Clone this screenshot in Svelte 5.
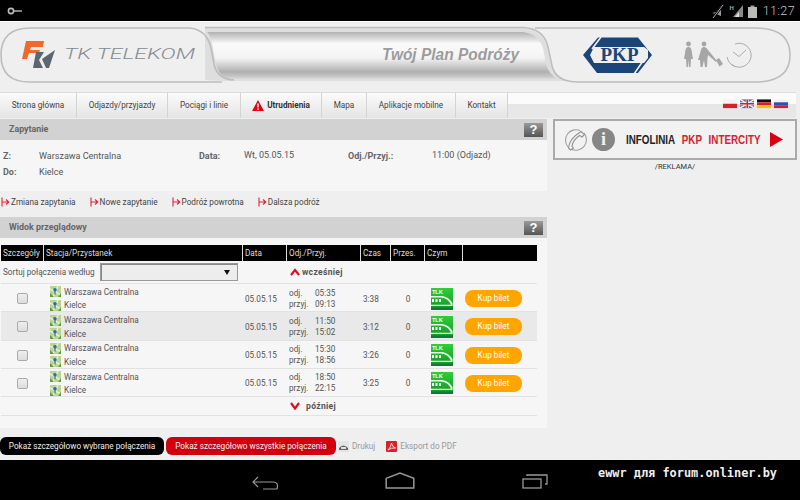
<script>
  const nav = [
    { label: 'Strona główna', w: 77 },
    { label: 'Odjazdy/przyjazdy', w: 91 },
    { label: 'Pociągi i linie', w: 73 },
    { label: 'Utrudnienia', w: 81, warn: true },
    { label: 'Mapa', w: 45 },
    { label: 'Aplikacje mobilne', w: 89 },
    { label: 'Kontakt', w: 52 }
  ];
  const links = ['Zmiana zapytania', 'Nowe zapytanie', 'Podróż powrotna', 'Dalsza podróż'];
  const rows = [
    { dep: '05:35', arr: '09:13', time: '3:38' },
    { dep: '11:50', arr: '15:02', time: '3:12', alt: true },
    { dep: '15:30', arr: '18:56', time: '3:26' },
    { dep: '18:50', arr: '22:15', time: '3:25' }
  ];
</script>

{#snippet map()}
  <svg class="map" viewBox="0 0 11 11">
    <rect width="11" height="11" fill="#b9d68e" />
    <path d="M0 3 L11 9 M8 0 L3 11" stroke="#f0efd2" stroke-width="1.5" />
    <path d="M0 7 L4 11 H0Z M8 11 L11 7 V11Z" fill="#5f9e3e" />
    <circle cx="5" cy="3.8" r="1.8" fill="#2470b8" />
    <path d="M5 5 V8.5" stroke="#245a8c" stroke-width="1.1" />
  </svg>
{/snippet}

{#snippet help()}
  <span class="help">?</span>
{/snippet}

{#snippet arrow()}
  <svg class="arrow" viewBox="0 0 9 10"><path d="M1 0.5 V9.5 M1 5 H7.5 M5 2.5 L7.8 5 L5 7.5" fill="none" stroke="#e8203a" stroke-width="1.1" /></svg>
{/snippet}

<div class="screen">
  <div class="status">
    <svg class="key" viewBox="0 0 16 8"><circle cx="4" cy="4" r="2.6" fill="none" stroke="#bbb" stroke-width="1.6" /><path d="M7 4 H15" stroke="#bbb" stroke-width="1.4" /></svg>
    <div class="status-right">
      <svg class="st-icons" viewBox="0 0 47 14">
        <path d="M1 9 L5 8 L10 2 V12 L5 10Z" fill="#999" />
        <path d="M2 14 L12 1" stroke="#000" stroke-width="2.4" />
        <path d="M2 14 L12 1" stroke="#aaa" stroke-width="1" />
        <text x="18.5" y="5.5" class="hplus">H</text>
        <path d="M22 13 L32 13 L32 1 Z" fill="#8a8a8a" />
        <path d="M24 13 L28 13 L28 8 Z" fill="#ddd" />
        <rect x="37" y="3" width="9" height="11" fill="#bbb" /><rect x="39.5" y="1.5" width="4" height="1.5" fill="#999" />
      </svg>
      <span class="clock">11:27</span>
    </div>
  </div>

  <div class="page">
    <svg class="banner" viewBox="0 22 800 70" width="800" height="70">
      <defs>
        <linearGradient id="g" x1="0" x2="0" y1="0" y2="1">
          <stop offset="0" stop-color="#b2b2b2" /><stop offset=".25" stop-color="#fafafa" /><stop offset=".55" stop-color="#f4f4f4" /><stop offset=".85" stop-color="#b0b0b0" /><stop offset=".95" stop-color="#c8c8c8" /><stop offset="1" stop-color="#dcdcdc" />
        </linearGradient>
      </defs>
      <path d="M205 27.5 H522 Q542 29 547 47 L551 66 Q555 78 566 81 H225 L205 80Z" fill="#dedede" />
      <path d="M207 32 H522 Q538 33 543 48 L546 64 Q549 75 558 79 H232 Q219 78 216 64 L213 48 Q211 36 207 32Z" fill="url(#g)" />
      <path d="M222 82 H30 Q1 82 1 55 Q1 28 30 28 H190 Q207 30 211 48 L214 64 Q217 79 234 80" fill="none" stroke="#bdbdbd" stroke-width="1.6" />
      <path d="M205 27.5 H524 Q544 29 548 47 L552 66 Q556 82 578 82 H755 Q790 82 790 55 Q790 28 755 28 H535" fill="none" stroke="#bdbdbd" stroke-width="1.6" />
      <path d="M26 41 H44 L43 47 H31 L30 50 H40 L39 53 H29 L27 59 H22Z" fill="#f2682a" />
      <path d="M36 52 L44 52 L39 60 L43 68 H33Z M55 50 L49 68 H46 L42 59Z" fill="#5c6670" />
      <text x="64" y="59" class="tk" textLength="131" lengthAdjust="spacingAndGlyphs">TK TELEKOM</text>
      <text x="382" y="60" class="plan" textLength="137" lengthAdjust="spacingAndGlyphs">Twój Plan Podróży</text>

      <path d="M598 37.5 H638 L652 55 L638 73 H597 L583 55Z" fill="#1b4579" />
      <path d="M594 47 H644 V63 H594 L590 55Z" fill="#efefef" />
      <path d="M601 37 L592 49 M643 61 L634 74" stroke="#efefef" stroke-width="1.6" />
      <path d="M648 50 L644 47 V63 L648 58Z" fill="#efefef" />
      <text x="619.5" y="61" class="pkp" text-anchor="middle">PKP</text>

      <g fill="#a6a6a6">
        <circle cx="688.5" cy="44" r="2.4" />
        <path d="M688.5 47 Q686 47 685.5 50 L684 59 L686 59 L686.5 67 H688 L688.5 60 L689 67 H690.5 L691 59 L693 59 L691.5 50 Q691 47 688.5 47Z" />
        <circle cx="704" cy="44" r="2.4" />
        <path d="M704 47 Q701.5 47 701 50 L698 60 L700 60 L700.5 67 H702.5 L704 60 L705 67 H707 L707.5 58 L708 55 L716 62 L717 61 L708 50 Q706.5 47 704 47Z" />
        <path d="M716 60 L719 58 L723 64 L719.5 66.5Z" />
      </g>
      <path d="M731 64 A12 12 0 1 0 735 44" fill="none" stroke="#ababab" stroke-width="1" />
      <path d="M727.2 57 A12 12 0 0 0 735 66.5" fill="none" stroke="#ababab" stroke-width="1" />
      <path d="M733 52 L739 56.5 L746 50" fill="none" stroke="#ababab" stroke-width="1" />
    </svg>

    <nav class="nav">
      {#each nav as n}
        <a class="nav-item" class:bold={n.warn} style="width:{n.w}px">
          {#if n.warn}
            <svg class="warn" viewBox="0 0 12 11"><path d="M6 0 L12 11 H0Z" fill="#e10613" /><path d="M6 3.5 V7.5 M6 8.5 V10" stroke="#fff" stroke-width="1.4" /></svg>
          {/if}
          {n.label}
        </a>
      {/each}
      <div class="flags">
        <svg viewBox="0 0 15 9"><rect width="15" height="4.5" fill="#f2f2f2" /><rect y="4.5" width="15" height="4.5" fill="#d5202b" /></svg>
        <svg viewBox="0 0 15 9"><rect width="15" height="9" fill="#5a68a8" /><path d="M0 0 L15 9 M15 0 L0 9" stroke="#eee" stroke-width="1.6" /><path d="M7.5 0 V9 M0 4.5 H15" stroke="#eee" stroke-width="3" /><path d="M7.5 0 V9 M0 4.5 H15" stroke="#d5202b" stroke-width="1.5" /></svg>
        <svg viewBox="0 0 15 9"><rect width="15" height="3" fill="#111" /><rect y="3" width="15" height="3" fill="#d5202b" /><rect y="6" width="15" height="3" fill="#f4c20d" /></svg>
        <svg viewBox="0 0 15 9"><rect width="15" height="3" fill="#f2f2f2" /><rect y="3" width="15" height="3" fill="#2a4fb5" /><rect y="6" width="15" height="3" fill="#d5202b" /></svg>
      </div>
    </nav>

    <div class="columns">
      <main class="left">
        <section class="query">
          <header class="bar"><h2>Zapytanie</h2>{@render help()}</header>
          <div class="query-body">
            <b class="q-z">Z:</b><span class="q-from">Warszawa Centralna</span>
            <b class="q-d">Data:</b><span class="q-date">Wt, 05.05.15</span>
            <b class="q-o">Odj./Przyj.:</b><span class="q-time">11:00 (Odjazd)</span>
            <b class="q-do">Do:</b><span class="q-to">Kielce</span>
          </div>
        </section>

        <div class="links">
          {#each links as l}
            <a class="link">{@render arrow()}{l}</a>
          {/each}
        </div>

        <section class="results">
          <header class="bar"><h2>Widok przeglądowy</h2>{@render help()}</header>
          <div class="table">
            <div class="tr th">
              <span>Szczegóły</span><span>Stacja/Przystanek</span><span>Data</span><span>Odj./Przyj.</span><span>Czas</span><span>Przes.</span><span>Czym</span><span></span>
            </div>
            <div class="sort">
              <div class="sort-left">
                <span class="sort-label">Sortuj połączenia według</span>
                <div class="select"><i></i></div>
              </div>
              <div class="earlier">
                <svg viewBox="0 0 10 8"><path d="M1 7 L5 2 L9 7" fill="none" stroke="#e01020" stroke-width="2.2" /></svg>
                <b>wcześniej</b>
              </div>
            </div>
            {#each rows as r}
              <div class="tr row" class:alt={r.alt}>
                <span class="c-check"><i class="check"></i></span>
                <span class="c-st">
                  <span class="st">{@render map()}Warszawa Centralna</span>
                  <span class="st">{@render map()}Kielce</span>
                </span>
                <span class="c-date">05.05.15</span>
                <span class="c-times">
                  <span>odj.</span><span>{r.dep}</span>
                  <span>przyj.</span><span>{r.arr}</span>
                </span>
                <span class="c-time">{r.time}</span>
                <span class="c-mid">0</span>
                <span class="c-tlk">
                  <svg viewBox="0 0 22 22" width="22" height="22">
                    <defs>
                      <linearGradient id="tg" x1="0" x2="0" y1="0" y2="1"><stop offset="0" stop-color="#2fce38" /><stop offset="1" stop-color="#15932a" /></linearGradient>
                    </defs>
                    <rect width="22" height="22" fill="url(#tg)" />
                    <text x="1" y="6.2" class="tlk">TLK</text>
                    <path d="M0 8 H11 Q18 9 21.5 15 V18 H0 V16.8 H20 Q17 10 10 9.5 H0Z" fill="#e8f7e8" />
                    <path d="M1 11 H3 V14 H1Z M4.5 11 H6.5 V14 H4.5Z M8 11 H10 V14 H8Z" fill="#fff" />
                    <rect y="19.5" width="22" height="2.5" fill="#127a38" />
                  </svg>
                </span>
                <span class="c-buy"><a class="buy">Kup bilet</a></span>
              </div>
            {/each}
            <div class="later">
              <svg viewBox="0 0 10 8"><path d="M1 1 L5 6.5 L9 1" fill="none" stroke="#e01020" stroke-width="2.2" /></svg>
              <b>później</b>
            </div>
          </div>
        </section>

        <div class="actions">
          <a class="btn black">Pokaż szczegółowo wybrane połączenia</a>
          <a class="btn red">Pokaż szczegółowo wszystkie połączenia</a>
          <a class="tool print">
            <svg viewBox="0 0 11 11"><rect width="11" height="11" fill="#e4e4e4" /><path d="M1 7 Q5.5 2 10 7 V9 H1Z" fill="#666" /><rect x="3" y="6" width="5" height="2" fill="#ddd" /></svg>
            Drukuj
          </a>
          <a class="tool pdf">
            <svg viewBox="0 0 11 11"><rect width="11" height="11" rx="1" fill="#d9232a" /><path d="M2 9 Q5 6 5.5 2 Q6 6 9.5 7 Q5 6.5 2 9Z" fill="none" stroke="#fff" stroke-width=".8" /></svg>
            Eksport do PDF
          </a>
        </div>
      </main>

      <aside class="right">
        <div class="info">
          <svg class="phone" viewBox="0 0 24 24">
            <path d="M4 19 A10.5 10.5 0 0 1 16 2.5 M20 5 A10.5 10.5 0 0 1 7 21" fill="none" stroke="#a0a0a0" stroke-width="1.1" />
            <path d="M4.5 20 Q5 11 17 3.5 L20.5 6.5 L18 9 L15.5 7.5 Q9 12 8 18 L9.5 20 L6.5 22Z" fill="#f2f2f2" stroke="#909090" stroke-width="1.1" />
          </svg>
          <span class="i">i</span>
          <span class="info-text"><b>INFOLINIA</b><b class="r">PKP</b><b class="r">INTERCITY</b></span>
          <svg class="play" viewBox="0 0 13 15"><path d="M0 0 L13 7.5 L0 15Z" fill="#d90010" /></svg>
        </div>
        <div class="ad">/REKLAMA/</div>
      </aside>
    </div>
  </div>

  <div class="sysnav">
    <svg class="n-back" viewBox="0 0 28 16"><path d="M26 15 H12 M26 15 Q28 8 22 8 H2 M7 3 L2 8 L7 13" fill="none" stroke="#999" stroke-width="1.2" /></svg>
    <svg class="n-home" viewBox="0 0 28 16"><path d="M1 6 L14 1 L27 6 V15 H1Z" fill="none" stroke="#999" stroke-width="1.4" /></svg>
    <svg class="n-rec" viewBox="0 0 26 16"><rect x="1" y="6" width="18" height="9" fill="none" stroke="#999" stroke-width="1.3" /><path d="M5 3 V2 H25 V11 H23" fill="none" stroke="#999" stroke-width="1.3" /></svg>
    <span class="water">ewwr для forum.onliner.by</span>
  </div>
</div>

<style>
  :global(body) { margin: 0; background: #000; }
  .screen { width: 800px; height: 500px; overflow: hidden; display: flex; flex-direction: column; font-family: Roboto, "Liberation Sans", sans-serif; font-size: 8.2px; color: #555; }
  .status { height: 21px; background: #000; display: flex; align-items: center; justify-content: space-between; flex: none; }
  .key { width: 16px; height: 8px; margin-left: 7px; }
  .status-right { display: flex; align-items: center; gap: 5px; margin-right: 5px; }
  .st-icons { width: 47px; height: 14px; }
  .hplus { font-size: 6px; fill: #aaa; font-weight: 700; }
  .clock { color: #c4c4c4; font-size: 12.5px; font-weight: 300; letter-spacing: .4px; }

  .page { flex: 1; background: #efefef; border-top: 1px solid #fff; min-height: 0; display: flex; flex-direction: column; }
  .banner { display: block; height: 70px; flex: none; }
  .tk { font-family: Roboto, sans-serif; font-style: italic; font-weight: 300; font-size: 14px; fill: #858b90; }
  .plan { font-family: "Liberation Sans", sans-serif; font-style: italic; font-weight: 700; font-size: 16px; fill: #9c9c9c; }
  .pkp { font-family: "Liberation Serif", serif; font-weight: 700; font-size: 19px; fill: #1b4579; }

  .nav { height: 26px; display: flex; align-items: center; background: linear-gradient(#fbfbfb 44%, #e6e6e6 46%, #e8e8e8); border-top: 1px solid #ddd; flex: none; margin-right: 4px; box-sizing: border-box; }
  .nav-item { height: 100%; display: flex; align-items: center; justify-content: center; gap: 3px; font-size: 8.2px; color: #444; border-right: 1px solid #d4d4d4; box-sizing: border-box; flex: none; background: linear-gradient(#fbfbfb, #e4e4e4); padding-bottom: 1px; }
  .nav-item.bold { font-weight: 700; color: #333; }
  .warn { width: 12px; height: 11px; }
  .flags { margin-left: auto; margin-right: 8px; margin-bottom: 3px; display: flex; gap: 2.5px; align-items: center; }
  .flags svg { width: 14.5px; height: 9.5px; }

  .columns { display: flex; gap: 6px; flex: 1; padding-top: 1px; min-height: 0; }
  .left { width: 547px; flex: none; display: flex; flex-direction: column; }
  .right { width: 244px; flex: none; }

  .bar { height: 21px; background: #d2d2d2; display: flex; align-items: center; justify-content: space-between; padding: 0 4px 2px 9px; box-sizing: border-box; }
  .bar h2 { margin: 0; font-size: 8.9px; font-weight: 700; color: #666; }
  .help { width: 19px; height: 14px; background: linear-gradient(#9a9a9a, #555); color: #fff; font-weight: 700; font-size: 13px; line-height: 14px; text-align: center; font-family: "Liberation Sans", sans-serif; margin-top: 2px; }

  .query { background: #f6f6f6; }
  .query-body { height: 51px; display: grid; grid-template-columns: 36px 160px 45px 104px 84px 1fr; grid-template-rows: 16px 16px; padding: 8px 0 0 3px; box-sizing: border-box; font-size: 9px; align-items: center; }
  .query-body b { font-weight: 700; color: #666; }
  .q-z { grid-column: 1; grid-row: 1; } .q-from { grid-column: 2; grid-row: 1; }
  .q-d { grid-column: 3; grid-row: 1; } .q-date { grid-column: 4; grid-row: 1; margin-top: -3px; }
  .q-o { grid-column: 5; grid-row: 1; } .q-time { grid-column: 6; grid-row: 1; margin-top: -3px; }
  .q-do { grid-column: 1; grid-row: 2; } .q-to { grid-column: 2; grid-row: 2; }

  .links { height: 26px; display: flex; align-items: center; gap: 14px; padding: 0 0 5px 1px; box-sizing: border-box; color: #444; flex: none; }
  .link { display: flex; align-items: center; }
  .arrow { width: 9px; height: 10px; margin-right: 1px; }

  .results { background: #f6f6f6; height: 211px; }
  .table { padding: 7px 10px 0 1px; }
  .tr { display: grid; grid-template-columns: 43px 199px 44px 74px 30px 34px 38px 1fr; }
  .th { background: #000; color: #ddd; height: 16px; align-items: center; }
  .th span { height: 100%; display: flex; align-items: center; padding-left: 2px; box-sizing: border-box; border-right: 1px solid #ddd; overflow: hidden; white-space: nowrap; }
  .th span:last-child { border-right: 0; }
  .sort { height: 23px; display: flex; align-items: center; border-bottom: 1px solid #e2e2e2; box-sizing: border-box; }
  .sort-left { width: 286px; display: flex; align-items: center; padding-left: 2px; box-sizing: border-box; flex: none; }
  .sort-label { width: 97px; flex: none; }
  .select { width: 138px; height: 18px; background: #ededed; border: 1px solid #999; box-shadow: inset 1px 1px 0 #888; box-sizing: border-box; position: relative; }
  .select i { position: absolute; right: 7px; top: 6px; width: 0; height: 0; border: 3px solid transparent; border-top: 5px solid #111; border-bottom: 0; }
  .earlier, .later { display: flex; align-items: center; font-size: 8.6px; color: #555; }
  .earlier { margin-left: 3px; gap: 2px; }
  .earlier svg, .later svg { width: 10px; height: 8px; }
  .earlier b, .later b { font-weight: 700; letter-spacing: .3px; }

  .row { height: 28.34px; border-bottom: 1px solid #e2e2e2; box-sizing: border-box; align-items: center; padding-top: 1px; }
  .row.alt { background: #e9e9e9; }
  .c-check { display: flex; justify-content: center; }
  .check { width: 9px; height: 9px; border: 1px solid #aaa; border-radius: 2px; background: linear-gradient(#eee, #ddd); display: block; }
  .c-st { display: flex; flex-direction: column; padding-left: 6px; }
  .st { display: flex; align-items: center; gap: 3px; height: 13.5px; }
  .map { width: 11px; height: 11px; flex: none; }
  .c-date { padding-left: 2px; }
  .c-times { display: grid; grid-template-columns: 26px auto; padding-left: 2px; line-height: 11px; }
  .c-time { padding-left: 2px; }
  .c-mid { text-align: center; }
  .c-tlk { display: flex; padding-left: 6px; }
  .tlk { font: 700 5.5px "Liberation Sans", sans-serif; fill: #fff; }
  .c-buy { padding-left: 2px; }
  .buy { display: block; width: 57px; height: 17px; background: #ffa500; color: #fff; border-radius: 8px; text-align: center; line-height: 17px; font-size: 8.2px; }
  .later { height: 18px; padding-left: 289px; border-bottom: 1px solid #e2e2e2; gap: 6px; }

  .actions { display: flex; align-items: center; height: 18px; margin-top: 9px; }
  .btn { height: 18px; border-radius: 6px; color: #eee; display: flex; align-items: center; justify-content: center; flex: none; box-sizing: border-box; }
  .black { background: #000; width: 164px; margin-right: 2px; }
  .red { background: #d0000f; width: 170px; margin-right: 2px; }
  .tool { display: flex; align-items: center; gap: 3px; color: #999; }
  .print { margin-right: 11px; }
  .tool svg { width: 11px; height: 11px; }

  .info { height: 41px; border: 2px solid #aaa; box-sizing: border-box; display: flex; align-items: center; background: #f2f2f2; }
  .phone { width: 24px; height: 24px; margin-left: 9px; flex: none; }
  .i { width: 23px; height: 23px; margin-left: 4px; flex: none; border-radius: 50%; background: #868686; color: #f2f2f2; font: 700 18px/23px "Liberation Serif", serif; text-align: center; }
  .info-text { display: flex; gap: 8px; width: 132px; flex: none; margin-left: 11px; font-family: "Liberation Sans", sans-serif; font-size: 12px; color: #222; transform: scaleX(.82); transform-origin: left; white-space: nowrap; }
  .r { color: #d9202e; }
  .play { width: 13px; height: 15px; flex: none; margin-left: auto; margin-right: 12px; }
  .ad { text-align: center; color: #333; font-size: 7.5px; margin-top: 2px; }

  .sysnav { height: 40px; background: #000; flex: none; position: relative; }
  .n-back { position: absolute; left: 251px; top: 14px; width: 28px; height: 16px; }
  .n-home { position: absolute; left: 385px; top: 12px; width: 30px; height: 17px; }
  .n-rec { position: absolute; left: 522px; top: 13px; width: 26px; height: 16px; }
  .water { position: absolute; left: 598px; top: 6px; color: #eee; font: 700 11.9px "DejaVu Sans Mono", monospace; white-space: nowrap; }
</style>
